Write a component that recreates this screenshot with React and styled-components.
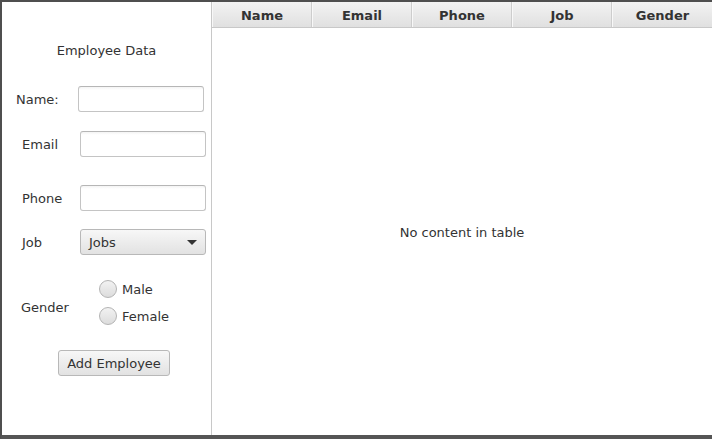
import React from 'react';
import styled, { createGlobalStyle } from 'styled-components';

const GlobalStyle = createGlobalStyle`
  html, body {
    margin: 0;
    padding: 0;
    background: #ffffff;
  }
  body {
    font-family: 'DejaVu Sans', Verdana, sans-serif;
    font-size: 13px;
    color: #333333;
  }
`;

const columns = ['Name', 'Email', 'Phone', 'Job', 'Gender'];

export default function App() {
  return (
    <>
      <GlobalStyle />
      <Frame>
        <Form>
          <Title>Employee Data</Title>

          <Row top={27}>
            <Label width={76} left={14}>Name:</Label>
            <TextInput />
          </Row>

          <Row top={19}>
            <Label width={78} left={20}>Email</Label>
            <TextInput />
          </Row>

          <Row top={28}>
            <Label width={78} left={20}>Phone</Label>
            <TextInput />
          </Row>

          <Row top={18}>
            <Label width={78} left={20}>Job</Label>
            <Combo>
              <ComboText>Jobs</ComboText>
              <Arrow />
            </Combo>
          </Row>

          <GenderRow>
            <Label width={97} left={19} offset={20}>Gender</Label>
            <RadioGroup>
              <RadioOption>
                <RadioDot />
                <RadioText>Male</RadioText>
              </RadioOption>
              <RadioOption>
                <RadioDot />
                <RadioText>Female</RadioText>
              </RadioOption>
            </RadioGroup>
          </GenderRow>

          <ButtonRow>
            <Button>Add Employee</Button>
          </ButtonRow>
        </Form>

        <Table>
          <Header>
            {columns.map((c) => (
              <HeaderCell key={c}>{c}</HeaderCell>
            ))}
          </Header>
          <Placeholder>No content in table</Placeholder>
        </Table>
      </Frame>
    </>
  );
}

const Frame = styled.div`
  width: 712px;
  height: 439px;
  box-sizing: border-box;
  display: flex;
  background: #ffffff;
  border-top: 2px solid #4f4f4f;
  border-left: 2px solid #4f4f4f;
  border-bottom: 4px solid #555555;
  overflow: hidden;
`;

const Form = styled.div`
  width: 209px;
  flex-shrink: 0;
  border-right: 1px solid #c8c8c8;
  display: flex;
  flex-direction: column;
`;

const Title = styled.div`
  margin-top: 41px;
  height: 16px;
  line-height: 16px;
  text-align: center;
`;

const Row = styled.div`
  display: flex;
  align-items: center;
  height: 26px;
  margin-top: ${(p) => p.top}px;
`;

const Label = styled.div`
  width: ${(p) => p.width}px;
  padding-left: ${(p) => p.left}px;
  padding-top: ${(p) => (p.offset === undefined ? 2 : p.offset)}px;
  box-sizing: border-box;
  flex-shrink: 0;
  line-height: 16px;
  color: #333333;
`;

const TextInput = styled.input`
  width: 126px;
  height: 26px;
  box-sizing: border-box;
  border: 1px solid #c4c4c4;
  border-top-color: #b6b6b6;
  border-radius: 3px;
  background: linear-gradient(#f4f4f4 0, #ffffff 3px, #ffffff 100%);
  padding: 0 6px;
  font: inherit;
  outline: none;
`;

const Combo = styled.div`
  width: 126px;
  height: 26px;
  box-sizing: border-box;
  border: 1px solid #b8b8b8;
  border-radius: 3px;
  background: linear-gradient(#f7f7f7, #e2e2e2);
  display: flex;
  align-items: center;
  justify-content: space-between;
  padding: 0 8px 0 8px;
  color: #333333;
`;

const ComboText = styled.span`
  padding-top: 1px;
`;

const Arrow = styled.span`
  width: 0;
  height: 0;
  border-left: 5px solid transparent;
  border-right: 5px solid transparent;
  border-top: 5px solid #333333;
`;

const GenderRow = styled.div`
  display: flex;
  align-items: flex-start;
  margin-top: 25px;
`;

const RadioGroup = styled.div`
  display: flex;
  flex-direction: column;
  gap: 9px;
`;

const RadioOption = styled.label`
  display: flex;
  align-items: center;
  gap: 5px;
  height: 18px;
  line-height: 16px;
  color: #333333;
`;

const RadioText = styled.span`
  padding-top: 1px;
`;

const RadioDot = styled.span`
  width: 18px;
  height: 18px;
  box-sizing: border-box;
  border-radius: 50%;
  border: 1px solid #b3b3b3;
  background: linear-gradient(#f2f2f2, #dcdcdc);
`;

const ButtonRow = styled.div`
  margin-top: 25px;
  padding-left: 56px;
  display: flex;
`;

const Button = styled.button`
  width: 112px;
  height: 26px;
  box-sizing: border-box;
  border: 1px solid #b8b8b8;
  border-radius: 3px;
  background: linear-gradient(#f7f7f7, #e2e2e2);
  font: inherit;
  color: #333333;
  padding: 1px 0 0;
`;

const Table = styled.div`
  flex: 1;
  display: flex;
  flex-direction: column;
`;

const Header = styled.div`
  display: flex;
  height: 26px;
  box-sizing: border-box;
  border-bottom: 1px solid #c8c8c8;
  background: linear-gradient(#f3f3f3, #e0e0e0);
`;

const HeaderCell = styled.div`
  width: 100px;
  box-sizing: border-box;
  border-right: 1px solid #cdcdcd;
  border-left: 1px solid #f8f8f8;
  text-align: center;
  padding-top: 2px;
  line-height: 23px;
  font-weight: bold;
  color: #333333;
  &:last-child {
    border-right: none;
  }
`;

const Placeholder = styled.div`
  flex: 1;
  display: flex;
  align-items: center;
  justify-content: center;
  padding-top: 2px;
  color: #333333;
`;
